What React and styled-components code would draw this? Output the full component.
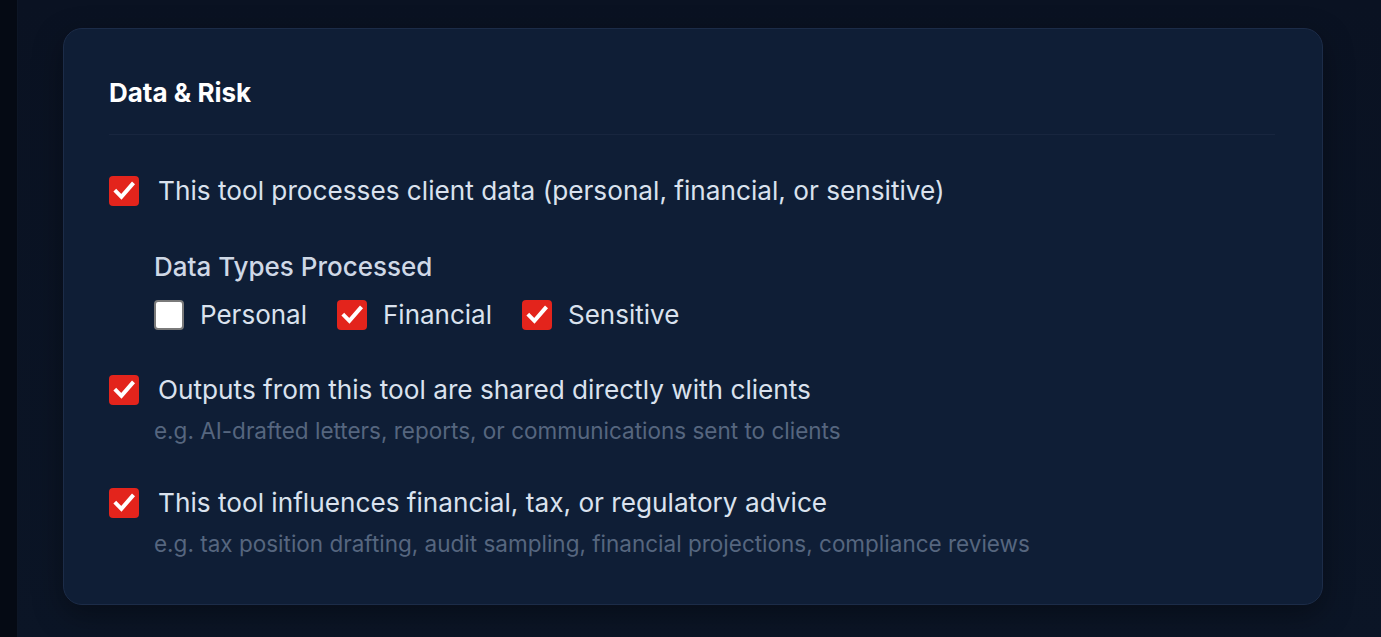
import React, { useState } from 'react';
import styled, { createGlobalStyle } from 'styled-components';

const Global = createGlobalStyle`
  html, body {
    margin: 0;
    padding: 0;
    background: #0a1322;
    font-family: Inter, "Noto Sans", "Liberation Sans", sans-serif;
  }
`;

const Page = styled.div`
  display: flex;
  min-height: 100vh;
  background: #0a1322;
`;

const Rail = styled.aside`
  width: 17px;
  flex-shrink: 0;
  background: #050a14;
  border-right: 1px solid #0d1626;
`;

const Main = styled.main`
  flex: 1;
  padding: 28px 58px 40px 45px;
  background: linear-gradient(180deg, #0a1222 0%, #0b1526 100%);
`;

const Card = styled.section`
  background: #0f1e36;
  border: 1px solid #1c2c48;
  border-radius: 19px;
  padding: 44px 47px 45px 45px;
  box-shadow: 0 10px 30px rgba(0, 0, 0, 0.35);
`;

const Title = styled.h2`
  margin: 0;
  padding-bottom: 21px;
  border-bottom: 1px solid #18263f;
  color: #ffffff;
  font-size: 26px;
  font-weight: 700;
  line-height: 40px;
`;

const Body = styled.div`
  display: flex;
  flex-direction: column;
  gap: 42px;
  padding-top: 41px;
`;

const Item = styled.div`
  display: flex;
  flex-direction: column;
`;

const Row = styled.label`
  display: flex;
  align-items: center;
  gap: ${(p) => p.$gap || 19}px;
  color: #dae2ee;
  font-size: ${(p) => p.$size || 26.2}px;
  line-height: 30px;
  cursor: pointer;
`;

const HiddenInput = styled.input.attrs({ type: 'checkbox' })`
  position: absolute;
  opacity: 0;
  width: 0;
  height: 0;
  margin: 0;
`;

const Box = styled.span`
  display: flex;
  width: 30px;
  height: 30px;
  flex-shrink: 0;
  box-sizing: border-box;
  border-radius: 4px;
  background: ${(p) => (p.$on ? '#e3241c' : '#ffffff')};
  border: ${(p) => (p.$on ? 'none' : '2px solid #7a7a7a')};
`;

const Hint = styled.div`
  margin-top: 11px;
  padding-left: 45px;
  color: #56667f;
  font-size: 22.5px;
  line-height: 30px;
`;

const Group = styled.div`
  display: flex;
  flex-direction: column;
  gap: 18px;
  padding: 46px 0 3px 45px;
`;

const GroupLabel = styled.div`
  color: #cfd8e6;
  font-size: 26px;
  font-weight: 500;
  line-height: 30px;
`;

const Options = styled.div`
  display: flex;
  align-items: center;
  gap: 30px;
`;

const Tick = () => (
  <svg width="30" height="30" viewBox="0 0 30 30" fill="none">
    <path d="M7.2 15.6 L12.4 20.8 L23.2 8.4" stroke="#fff" strokeWidth="4" strokeLinecap="square" strokeLinejoin="miter" />
  </svg>
);

function Check({ label, init, gap, size }) {
  const [on, setOn] = useState(init);
  return (
    <Row $gap={gap} $size={size}>
      <HiddenInput checked={on} onChange={() => setOn(!on)} />
      <Box $on={on}>{on && <Tick />}</Box>
      <span>{label}</span>
    </Row>
  );
}

export default function App() {
  return (
    <Page>
      <Global />
      <Rail />
      <Main>
        <Card>
          <Title>Data &amp; Risk</Title>
          <Body>
            <Item>
              <Check init label="This tool processes client data (personal, financial, or sensitive)" />
              <Group>
                <GroupLabel>Data Types Processed</GroupLabel>
                <Options>
                  <Check gap={16} size={26} init={false} label="Personal" />
                  <Check gap={16} size={26} init label="Financial" />
                  <Check gap={16} size={26} init label="Sensitive" />
                </Options>
              </Group>
            </Item>
            <Item>
              <Check init label="Outputs from this tool are shared directly with clients" />
              <Hint>e.g. AI-drafted letters, reports, or communications sent to clients</Hint>
            </Item>
            <Item>
              <Check init label="This tool influences financial, tax, or regulatory advice" />
              <Hint>e.g. tax position drafting, audit sampling, financial projections, compliance reviews</Hint>
            </Item>
          </Body>
        </Card>
      </Main>
    </Page>
  );
}
